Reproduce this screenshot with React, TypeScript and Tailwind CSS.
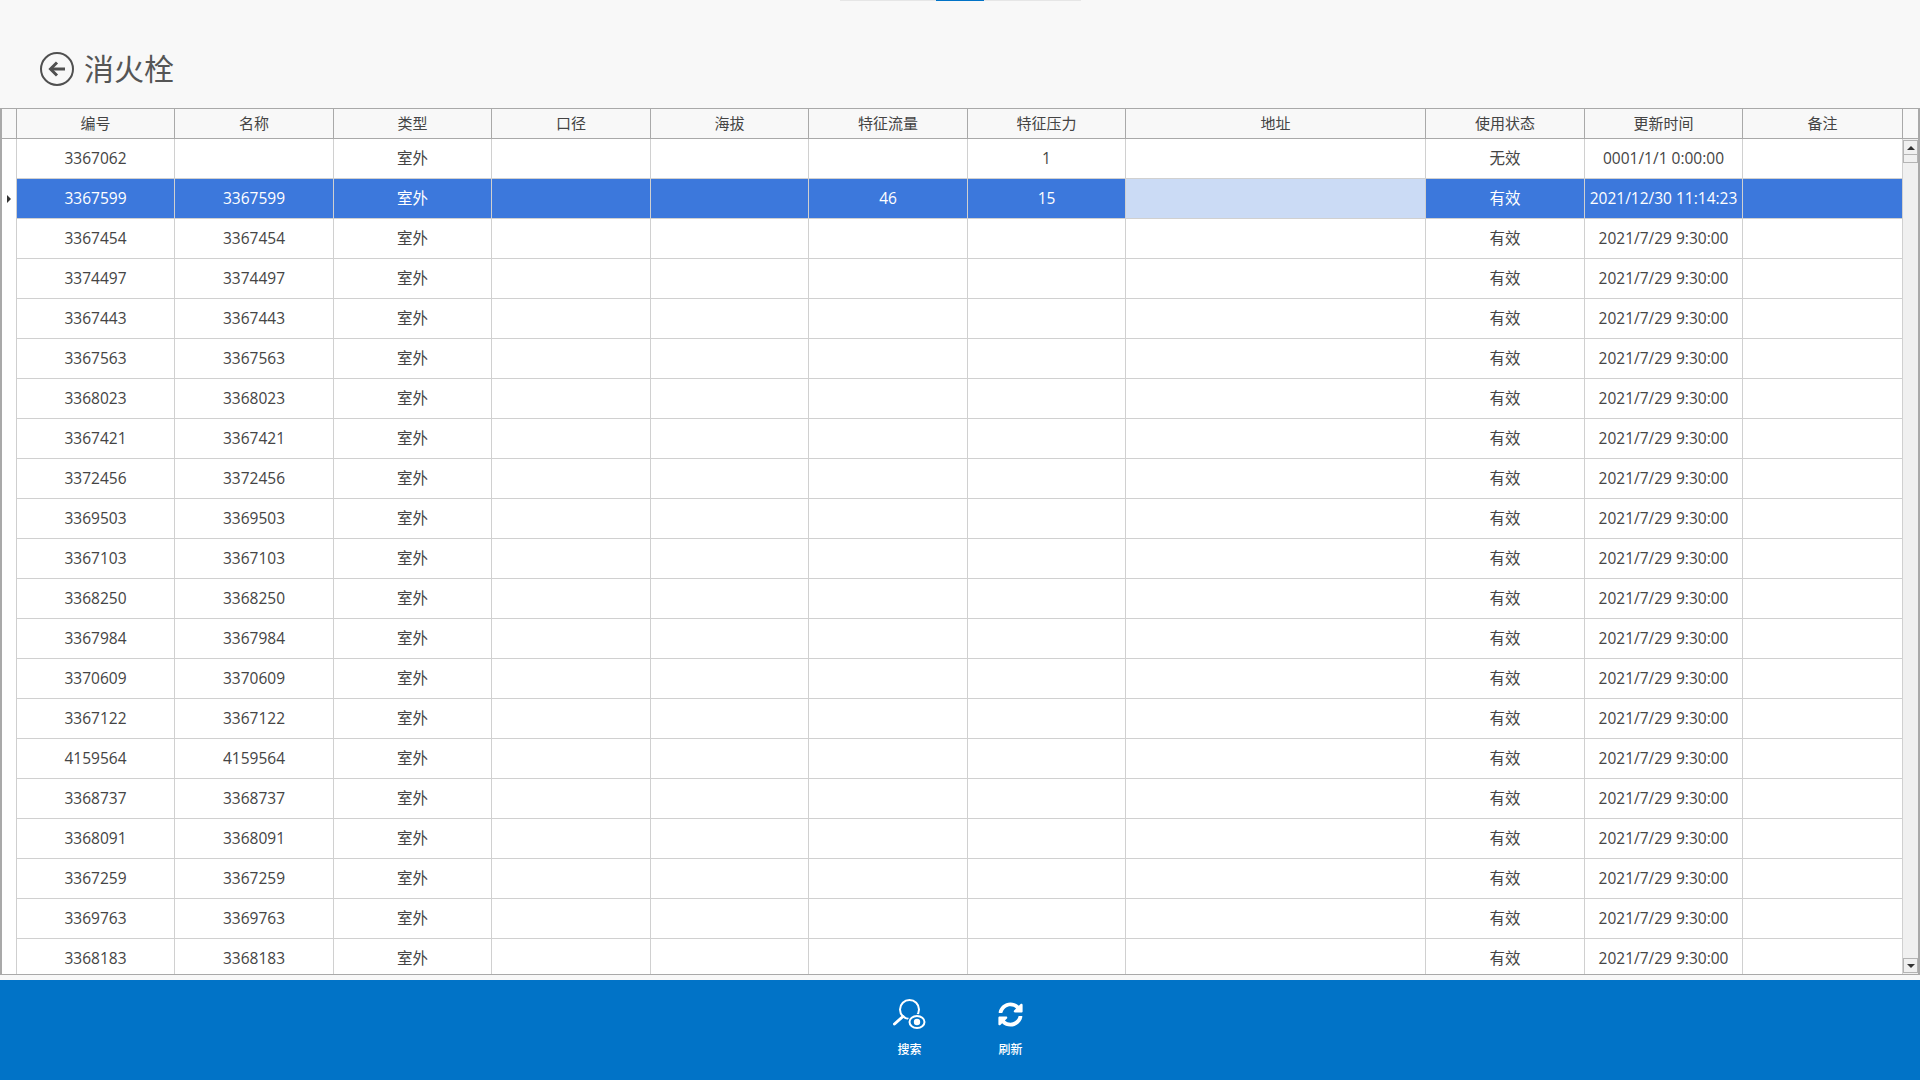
import { FaSyncAlt } from 'react-icons/fa'

const headers = ['编号', '名称', '类型', '口径', '海拔', '特征流量', '特征压力', '地址', '使用状态', '更新时间', '备注']

const ids = [
  '3367454', '3374497', '3367443', '3367563', '3368023', '3367421', '3372456', '3369503', '3367103',
  '3368250', '3367984', '3370609', '3367122', '4159564', '3368737', '3368091', '3367259', '3369763', '3368183',
]

const rows = [
  ['3367062', '', '室外', '', '', '', '1', '', '无效', '0001/1/1 0:00:00', ''],
  ['3367599', '3367599', '室外', '', '', '46', '15', '', '有效', '2021/12/30 11:14:23', ''],
  ...ids.map((id) => [id, id, '室外', '', '', '', '', '', '有效', '2021/7/29 9:30:00', '']),
]

const gridCols = 'grid grid-cols-[158px_159px_158px_159px_158px_159px_158px_300px_159px_158px_160px]'

function BackIcon() {
  return (
    <svg width="36" height="36" viewBox="0 0 36 36" fill="none" className="shrink-0">
      <circle cx="18" cy="18" r="16" stroke="#505050" strokeWidth="2" />
      <path d="M26 18H12" stroke="#505050" strokeWidth="3" />
      <path d="M18 11.5L11.5 18L18 24.5" stroke="#505050" strokeWidth="3" />
    </svg>
  )
}

function SearchEyeIcon() {
  return (
    <svg width="33" height="31" viewBox="0 0 33 31" fill="none">
      <circle cx="16.5" cy="10.5" r="9.5" stroke="white" strokeWidth="2" />
      <path d="M10 17.5L1.5 25" stroke="white" strokeWidth="3" strokeLinecap="round" />
      <ellipse cx="24" cy="23" rx="8" ry="6.5" fill="#0173c7" stroke="#0173c7" strokeWidth="3" />
      <ellipse cx="24" cy="23" rx="7.5" ry="6" fill="#0173c7" stroke="white" strokeWidth="2" />
      <circle cx="24" cy="23" r="3.2" fill="white" />
    </svg>
  )
}

function ToolButton({ label, icon }: { label: string; icon: React.ReactNode }) {
  return (
    <button className="flex w-[100px] flex-col items-center text-white">
      <div className="flex h-[31px] items-center justify-center">{icon}</div>
      <span className="mt-[11px] text-[12px] leading-[18px] font-medium">{label}</span>
    </button>
  )
}

export default function App() {
  return (
    <div className="flex h-[1080px] w-[1920px] flex-col overflow-hidden bg-[#f8f8f8] font-['Open_Sans','Noto_Sans_CJK_SC',sans-serif] text-[15.5px] text-[#444]">
      {/* Page indicator */}
      <div className="flex h-px justify-center">
        <div className="h-px w-[96px] bg-[#e6e6e6]" />
        <div className="h-px w-[48px] bg-[#0173c7]" />
        <div className="h-px w-[97px] bg-[#e6e6e6]" />
      </div>

      {/* Title */}
      <div className="flex h-[107px] items-center gap-[9px] pl-[39px] pt-[28px]">
        <BackIcon />
        <h1 className="text-[30px] leading-[40px] font-normal text-[#555]">消火栓</h1>
      </div>

      {/* Table */}
      <div className="flex h-[867px] border-y border-l-2 border-r-2 border-y-[#a9a9a9] border-x-[#a9a9a9]">
        <div className="flex min-w-0 flex-1 flex-col">
          <div className="flex h-[30px] border-b border-[#a9a9a9]">
            <div className="w-[15px] shrink-0 border-r border-[#a9a9a9]" />
            <div className={gridCols}>
              {headers.map((h) => (
                <div key={h} className="flex items-center justify-center border-r border-[#a9a9a9] text-[15px] text-[#444]">
                  {h}
                </div>
              ))}
            </div>
          </div>

          <div className="min-h-0 flex-1 overflow-hidden bg-white">
            {rows.map((row, i) => (
              <div key={i} className="flex h-[40px]">
                <div className="flex w-[15px] shrink-0 items-center justify-center border-r border-[#cfcfcf] bg-white">
                  {i === 1 && <div className="h-0 w-0 border-y-[4px] border-l-[4px] border-y-transparent border-l-[#333]" />}
                </div>
                <div className={gridCols}>
                  {row.map((cell, j) => (
                    <div
                      key={j}
                      className={`flex items-center justify-center border-r border-b whitespace-nowrap border-[#d0d0d0] ${
                        i === 1 ? (j === 7 ? 'bg-[#cbdbf5]' : 'bg-[#3c78dc] text-white') : 'bg-white'
                      }`}
                    >
                      {cell}
                    </div>
                  ))}
                </div>
              </div>
            ))}
          </div>
        </div>

        {/* Scrollbar */}
        <div className="flex w-[15px] shrink-0 flex-col">
          <div className="h-[30px] border-b border-[#a9a9a9]" />
          <div className="flex flex-1 flex-col justify-between bg-[#f0f0f0] py-[1px]">
            <div>
              <div className="flex h-[15px] items-center justify-center border border-[#b4b4b4] bg-[#f0f0f0]">
                <div className="h-0 w-0 border-x-[4px] border-b-[4px] border-x-transparent border-b-[#333]" />
              </div>
              <div className="h-[8px] border border-t-0 border-[#b4b4b4]" />
            </div>
            <div className="flex h-[15px] items-center justify-center border border-[#b4b4b4] bg-[#f0f0f0]">
              <div className="h-0 w-0 border-x-[4px] border-t-[4px] border-x-transparent border-t-[#333]" />
            </div>
          </div>
        </div>
      </div>

      {/* Toolbar */}
      <div className="mt-[5px] flex h-[100px] justify-center gap-px bg-[#0173c7] pt-[19px]">
        <ToolButton label="搜索" icon={<SearchEyeIcon />} />
        <ToolButton label="刷新" icon={<FaSyncAlt size={25} />} />
      </div>
    </div>
  )
}
